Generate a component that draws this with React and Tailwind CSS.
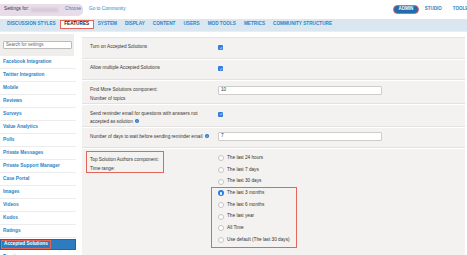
import React from "react";

const navItems = ["DISCUSSION STYLES", "FEATURES", "SYSTEM", "DISPLAY", "CONTENT", "USERS", "MOD TOOLS", "METRICS", "COMMUNITY STRUCTURE"];

const sideItems = [
  "Facebook Integration",
  "Twitter Integration",
  "Mobile",
  "Reviews",
  "Surveys",
  "Value Analytics",
  "Polls",
  "Private Messages",
  "Private Support Manager",
  "Case Portal",
  "Images",
  "Videos",
  "Kudos",
  "Ratings",
  "Accepted Solutions",
  "Tagging",
];

const ranges = [
  "The last 24 hours",
  "The last 7 days",
  "The last 30 days",
  "The last 3 months",
  "The last 6 months",
  "The last year",
  "All Time",
  "Use default (The last 30 days)",
];

function Check() {
  return (
    <div className="w-[5px] h-[5px] rounded-[1px] bg-[#2f7ee0] flex items-center justify-center">
      <svg viewBox="0 0 10 10" className="w-[4px] h-[4px]">
        <path d="M2 5.5 L4.2 7.5 L8 2.8" stroke="#fff" strokeWidth="1.6" fill="none" />
      </svg>
    </div>
  );
}

function Info() {
  return (
    <svg viewBox="0 0 10 10" className="inline-block w-[4px] h-[4px] ml-[2px] align-[-0.5px]">
      <circle cx="5" cy="5" r="5" fill="#1d70c4" />
      <rect x="4.2" y="4" width="1.6" height="4" fill="#fff" />
      <rect x="4.2" y="2" width="1.6" height="1.4" fill="#fff" />
    </svg>
  );
}

function Radio({ label, checked }) {
  return (
    <div className="h-[11.7px] flex items-center">
      {checked ? (
        <div className="w-[6px] h-[6px] rounded-full bg-[#2a7de1] flex items-center justify-center">
          <div className="w-[2.4px] h-[2.4px] rounded-full bg-white" />
        </div>
      ) : (
        <div className="w-[6px] h-[6px] rounded-full bg-white border-[0.5px] border-[#c4c4c4]" />
      )}
      <span className="ml-[3px]">{label}</span>
    </div>
  );
}

function Input({ value }) {
  return (
    <div className="w-[164px] h-[9px] bg-white border border-[#cfcdca] rounded-[1px] flex items-center px-[2px] text-[4.7px]">
      {value}
    </div>
  );
}

export default function App() {
  return (
    <div className="w-[467px] h-[255px] overflow-hidden bg-white text-[#333] font-['Liberation_Sans',Arial,sans-serif] text-[4.7px] leading-none whitespace-nowrap">
      {/* top bar */}
      <div className="h-[19px] flex items-center">
        <div className="w-[83px] h-[12px] bg-[#e8dce9] rounded-r-[5px] flex items-center pl-[4px] shrink-0">
          <span>Settings for:</span>
          <div className="ml-[2px] w-[27px] h-[4px] bg-[#d4c9d6] blur-[1px]" />
          <span className="ml-[7px] text-[#2a83cc]">Choose</span>
        </div>
        <span className="ml-[6px] text-[#2a83cc]">Go to Community</span>
        <div className="ml-auto flex items-center font-bold text-[4.5px]">
          <div className="w-[26px] h-[9px] rounded-full bg-[#1f6cae] border border-[#e2675a] text-white flex items-center justify-center">
            ADMIN
          </div>
          <span className="ml-[6px] text-[#2a7fc6]">STUDIO</span>
          <span className="ml-[11px] mr-[-8px] text-[#2a7fc6]">TOOLBOX</span>
        </div>
      </div>

      {/* nav */}
      <div className="h-[12.5px] bg-[#dae7f0] border-b border-[#e8eef2] flex items-center pl-[3px] font-bold text-[4.7px] text-[#2b84c9]">
        {navItems.map((n) =>
          n === "FEATURES" ? (
            <div key={n} className="h-[9px] px-[3.5px] bg-white border border-[#e2675a] flex items-center text-[#222]">
              {n}
            </div>
          ) : (
            <div key={n} className="px-[4px]">{n}</div>
          )
        )}
      </div>

      {/* body */}
      <div className="flex mt-[2px]">
        {/* sidebar */}
        <div className="w-[76px] shrink-0">
          <div className="h-[22.5px] w-[74px] bg-[#efeeec] flex items-center pl-[3px]">
            <div className="w-[69px] h-[8.5px] bg-white border border-[#bdbbb8] rounded-[1px] flex items-center pl-[2px] text-[#666] text-[4.5px]">
              Search for settings
            </div>
          </div>
          <div>
            {sideItems.map((s) =>
              s === "Accepted Solutions" ? (
                <div key={s} className="h-[11px] my-[1px] bg-[#2c7cbf] border border-[#1f66a3] flex items-center">
                  <span className="h-full px-[2px] border border-[#e2675a] flex items-center font-bold text-white">{s}</span>
                </div>
              ) : (
                <div key={s} className="h-[13px] border-b border-[#ececec] flex items-center pl-[3px] font-bold text-[#2a84c8] text-[4.8px]">
                  {s}
                </div>
              )
            )}
          </div>
        </div>

        {/* main panel */}
        <div className="ml-[6px] mr-[2px] mt-[3px] flex-1 bg-[#f3f2f0] border-t border-[#e6e5e3] h-[220px]">
          <div className="h-[21px] flex items-center pl-[8px] border-b border-[#e3e2e0] shadow-[0_1px_0_#fff]">
            <div className="w-[128px]">Turn on Accepted Solutions</div>
            <Check />
          </div>
          <div className="h-[21px] flex items-center pl-[8px] border-b border-[#e3e2e0] shadow-[0_1px_0_#fff]">
            <div className="w-[128px]">Allow multiple Accepted Solutions</div>
            <Check />
          </div>
          <div className="h-[24px] flex items-start pt-[6px] pl-[8px] border-b border-[#e3e2e0] shadow-[0_1px_0_#fff]">
            <div className="w-[128px] leading-[9px] -mt-[1px]">
              <div>Find More Solutions component:</div>
              <div>Number of topics</div>
            </div>
            <Input value="10" />
          </div>
          <div className="h-[23px] flex items-start pt-[7px] pl-[8px] border-b border-[#e3e2e0] shadow-[0_1px_0_#fff]">
            <div className="w-[128px] leading-[8px] -mt-[1px]">
              <div>Send reminder email for questions with answers not</div>
              <div>
                accepted as solution
                <Info />
              </div>
            </div>
            <div className="mt-[1px]">
              <Check />
            </div>
          </div>
          <div className="h-[21px] flex items-center pl-[8px] border-b border-[#e3e2e0] shadow-[0_1px_0_#fff]">
            <div className="w-[128px]">
              Number of days to wait before sending reminder email
              <Info />
            </div>
            <Input value="7" />
          </div>
          <div className="flex">
            <div className="w-[129px] shrink-0 pl-[4px] pt-[3px]">
              <div className="w-[78px] h-[22px] border border-[#e2675a] pl-[3px] pt-[3.5px] leading-[9px]">
                <div>Top Solution Authors component:</div>
                <div>Time range:</div>
              </div>
            </div>
            <div className="pt-[5px]">
              <div className="pl-[7px]">
                {ranges.slice(0, 3).map((r) => (
                  <Radio key={r} label={r} />
                ))}
              </div>
              <div className="w-[86px] border border-[#e2675a] pl-[6px] mt-[-1px] pb-[1px]">
                {ranges.slice(3).map((r, i) => (
                  <Radio key={r} label={r} checked={i === 0} />
                ))}
              </div>
            </div>
          </div>
        </div>
      </div>
    </div>
  );
}
